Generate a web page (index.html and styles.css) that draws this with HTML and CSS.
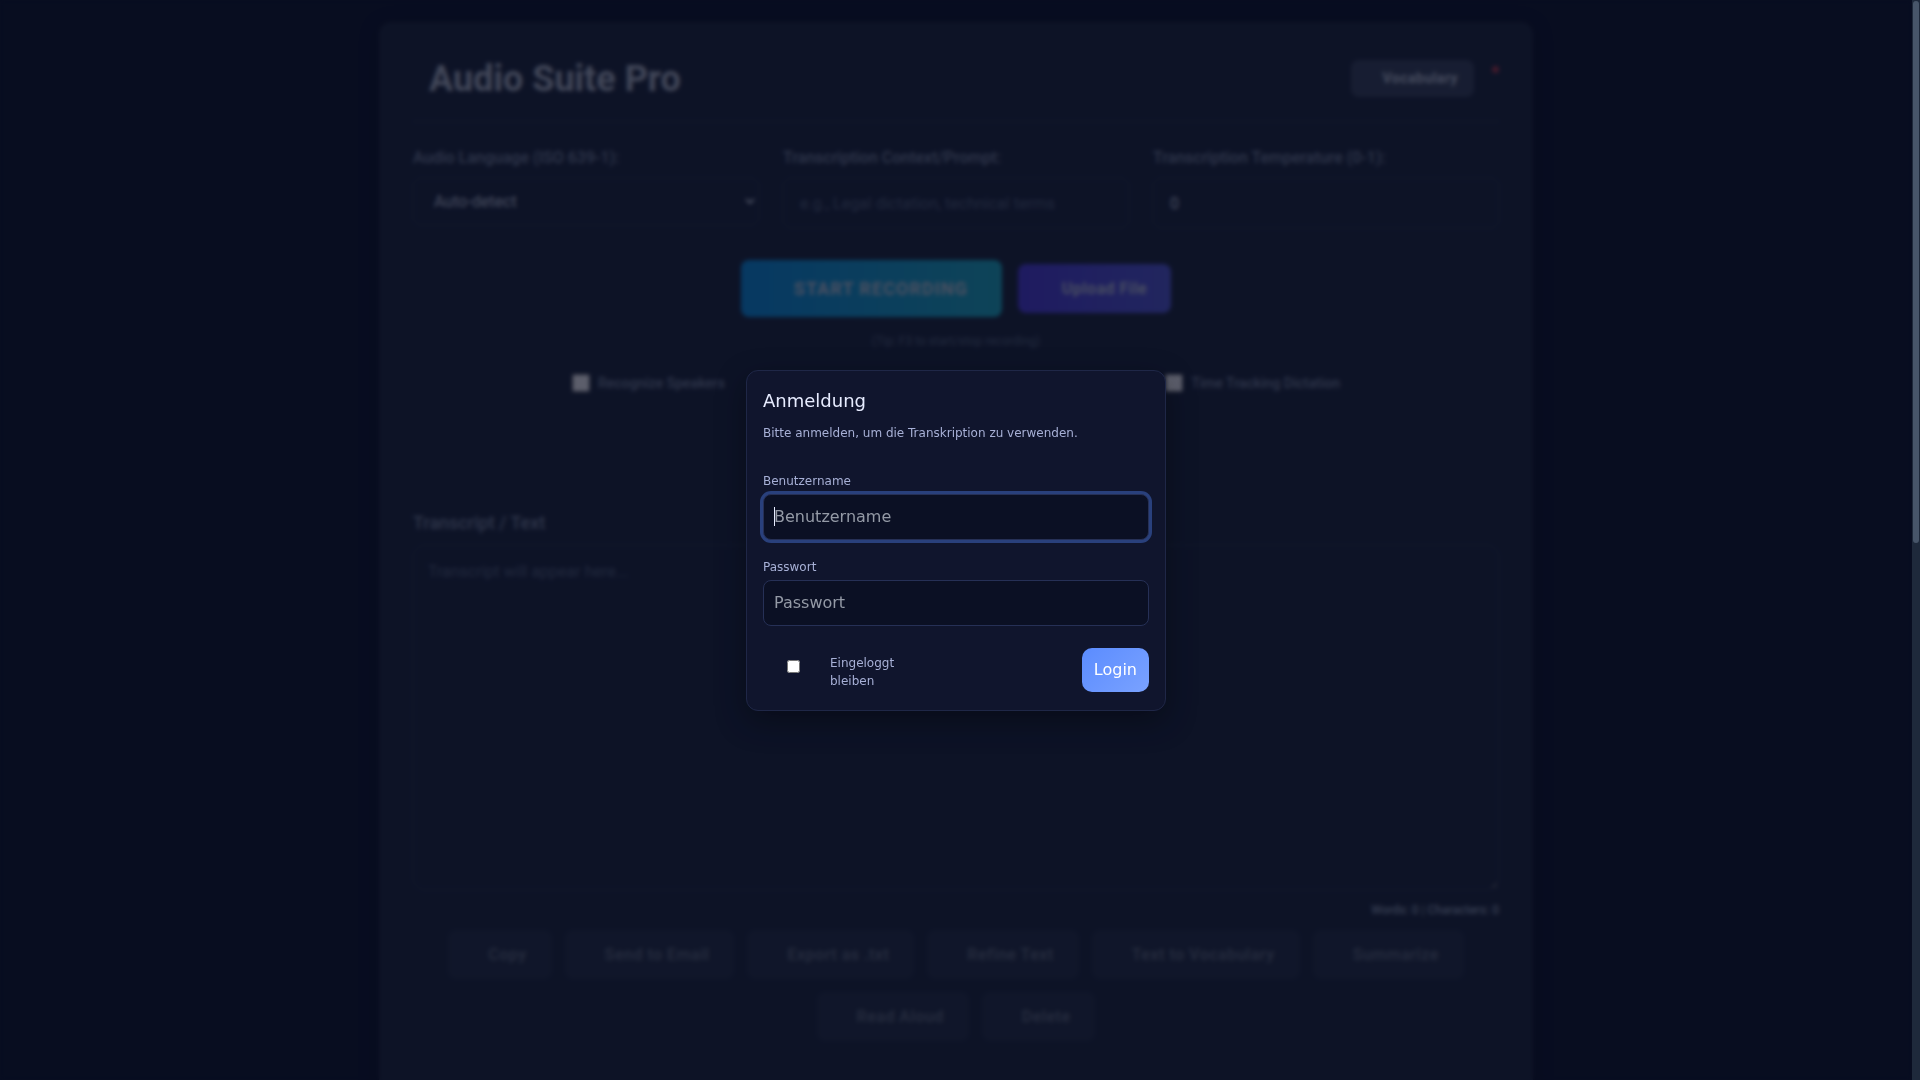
FILE: index.html
```html
<!DOCTYPE html>
<html lang="de">

<head>
  <meta charset="UTF-8">
  <meta name="viewport" content="width=device-width, initial-scale=1.0">
  <title>Audio Suite Pro</title>
  <link rel="stylesheet" href="styles.css">
</head>

<body>
  <div class="page">
    <main class="container">
      <header class="header">
        <h1 class="title">Audio Suite Pro</h1>
        <div class="header-actions">
          <button class="btn btn-vocabulary" type="button">Vocabulary</button>
          <span class="status-dot"></span>
        </div>
      </header>

      <div class="settings">
        <div class="field">
          <label for="language">Audio Language (ISO 639-1):</label>
          <select id="language" class="control control-select">
            <option>Auto-detect</option>
          </select>
        </div>
        <div class="field">
          <label for="prompt">Transcription Context/Prompt:</label>
          <input id="prompt" class="control" type="text" placeholder="e.g., Legal dictation, technical terms">
        </div>
        <div class="field">
          <label for="temperature">Transcription Temperature (0-1):</label>
          <input id="temperature" class="control" type="number" min="0" max="1" step="0.1" value="0">
        </div>
      </div>

      <div class="record-row">
        <button class="btn btn-record" type="button">START RECORDING</button>
        <button class="btn btn-upload" type="button">Upload File</button>
      </div>
      <p class="tip">(Tip: F3 to start/stop recording)</p>

      <div class="options">
        <label class="option"><input type="checkbox"> Recognize Speakers</label>
        <label class="option"><input type="checkbox"> Time Tracking Dictation</label>
      </div>

      <section class="transcript">
        <label class="transcript-label" for="transcript">Transcript / Text</label>
        <textarea id="transcript" class="transcript-text" placeholder="Transcript will appear here..."></textarea>
        <div class="counter">Words: 0 | Characters: 0</div>
      </section>

      <div class="actions">
        <button class="btn btn-action" type="button" disabled>Copy</button>
        <button class="btn btn-action" type="button" disabled>Send to Email</button>
        <button class="btn btn-action" type="button" disabled>Export as .txt</button>
        <button class="btn btn-action" type="button" disabled>Refine Text</button>
        <button class="btn btn-action" type="button" disabled>Text to Vocabulary</button>
        <button class="btn btn-action" type="button" disabled>Summarize</button>
        <button class="btn btn-action" type="button" disabled>Read Aloud</button>
        <button class="btn btn-action" type="button" disabled>Delete</button>
      </div>
    </main>
  </div>

  <div class="overlay">
    <form class="login" onsubmit="return false">
      <h2 class="login-title">Anmeldung</h2>
      <p class="login-text">Bitte anmelden, um die Transkription zu verwenden.</p>
      <label class="login-label" for="username">Benutzername</label>
      <input id="username" class="login-input" type="text" placeholder="Benutzername" autofocus>
      <label class="login-label" for="password">Passwort</label>
      <input id="password" class="login-input" type="password" placeholder="Passwort">
      <div class="login-footer">
        <div class="remember">
          <input id="remember" type="checkbox">
          <label for="remember">Eingeloggt bleiben</label>
        </div>
        <button class="login-button" type="submit">Login</button>
      </div>
    </form>
  </div>

  <!-- scroll position of the page -->
  <div class="scroll-track">
    <div class="scroll-thumb"></div>
  </div>
</body>

</html>
```

FILE: styles.css
```css
* {
  box-sizing: border-box;
}

body {
  margin: 0;
  background: #0f172a;
  color: #e2e8f0;
  font-family: Roboto, sans-serif;
  font-size: 16px;
  line-height: 24px;
}

/* the page scrolls beside its own 8px bar */
.page {
  height: 100vh;
  margin-right: 8px;
  padding: 22px 24px;
  overflow-y: auto;
  scrollbar-width: none;
}

.container {
  max-width: 1154px;
  min-height: 194vh;
  margin: 0 auto;
  padding: 35px 34px;
  background: #1e293b;
  border-radius: 12px;
  box-shadow: 0 4px 20px rgba(0, 0, 0, 0.3);
}

.header {
  display: flex;
  justify-content: space-between;
  align-items: center;
  height: 65px;
  padding: 0 0 21px 16px;
  border-bottom: 1px solid #2e3a4f;
  margin-bottom: 24px;
}

.title {
  margin: 0;
  font-size: 36px;
  line-height: 40px;
  font-weight: 700;
  color: #b4bdca;
}

.header-actions {
  display: flex;
  align-items: center;
  gap: 18px;
}

.btn {
  border: none;
  border-radius: 8px;
  color: #cbd5e1;
  font-family: inherit;
  font-size: 16px;
  font-weight: 600;
  line-height: 25px;
  letter-spacing: 0.5px;
  cursor: pointer;
}

.btn-vocabulary {
  padding: 8px 16px 8px 32px;
  background: #3b475c;
  font-size: 14px;
  line-height: 21px;
}

.status-dot {
  width: 7px;
  height: 7px;
  margin-bottom: 18px;
  border-radius: 50%;
  background: #b83c48;
}

.settings {
  display: grid;
  grid-template-columns: repeat(3, 1fr);
  align-items: start;
  gap: 24px;
  margin-bottom: 32px;
}

.field {
  display: flex;
  flex-direction: column;
  gap: 8px;
}

.field label,
.transcript-label {
  font-weight: 500;
  color: #7f8da3;
}

.control {
  width: 100%;
  height: 50px;
  padding: 12px 16px;
  background: #1d283b;
  border: 1px solid #2e3a4f;
  border-radius: 8px;
  color: #cbd5e1;
  font-family: inherit;
  font-size: 16px;
}

.control-select {
  height: 47px;
}

.control::placeholder,
.transcript-text::placeholder {
  color: #5a697f;
}

.record-row {
  display: flex;
  justify-content: center;
  align-items: center;
  gap: 16px;
}

.btn-record {
  padding: 16px 34px 16px 53px;
  background: linear-gradient(90deg, #0c93e4, #20b4c8);
  font-size: 18px;
  font-weight: 700;
  letter-spacing: 1px;
}

.btn-upload {
  padding: 12px 24px 12px 44px;
  background: linear-gradient(90deg, #4f3fe0, #575fdb);
}

.tip {
  margin: 12px 0 18px;
  text-align: center;
  font-size: 12px;
  color: #5a697f;
}

.options {
  display: flex;
  justify-content: space-between;
  max-width: 768px;
  margin: 0 auto;
}

.option {
  display: flex;
  align-items: center;
  gap: 8px;
  font-size: 14px;
  font-weight: 500;
  color: #7f8da3;
}

.option input {
  width: 18px;
  height: 18px;
  margin: 0;
}

.transcript {
  display: flex;
  flex-direction: column;
  margin-top: 116px;
}

.transcript-label {
  margin-bottom: 10px;
  font-size: 18px;
}

.transcript-text {
  width: 100%;
  height: 345px;
  padding: 14px;
  background: #1d283b;
  border: 1px solid #2e3a4f;
  border-radius: 12px;
  color: #e2e8f0;
  font-family: inherit;
  font-size: 16px;
  line-height: 24px;
  resize: vertical;
}

.counter {
  margin: 8px 0;
  text-align: right;
  font-size: 12px;
  font-weight: 500;
  color: #94a3b8;
}

.actions {
  display: flex;
  flex-wrap: wrap;
  justify-content: center;
  gap: 13px;
  padding: 0 32px;
}

.btn-action {
  padding: 12px 25px 12px 40px;
  background: #334155;
  opacity: 0.4;
}

.overlay {
  position: fixed;
  inset: 0 8px 0 0;
  display: flex;
  justify-content: center;
  align-items: center;
  background: rgba(5, 8, 27, 0.65);
  backdrop-filter: blur(2px);
}

.scroll-track {
  position: fixed;
  inset: 0 0 0 auto;
  width: 8px;
  padding: 1px;
  background: #1e293b;
}

.scroll-thumb {
  height: 50.3%;
  background: #475569;
  border-radius: 4px;
}

.login {
  width: 420px;
  padding: 16px 16px 18px;
  background: #10152d;
  border: 1px solid #1f2747;
  border-radius: 12px;
  box-shadow: 0 10px 30px rgba(0, 0, 0, 0.35);
  color: #e7ecff;
  font-family: "DejaVu Sans", sans-serif;
}

.login-title {
  margin: 0 0 10px;
  font-size: 18px;
  font-weight: 400;
  line-height: 27px;
}

.login-text {
  margin: 0 0 30px;
  font-size: 12px;
  line-height: 18px;
  color: #a7b0d6;
}

.login-label {
  display: block;
  margin-bottom: 4px;
  font-size: 12px;
  line-height: 18px;
  color: #a7b0d6;
}

.login-input {
  display: block;
  width: 100%;
  height: 46px;
  margin-bottom: 18px;
  padding: 10px;
  background: #0b1024;
  border: 1px solid #263056;
  border-radius: 8px;
  color: #e7ecff;
  font-family: inherit;
  font-size: 16px;
}

.login-input::placeholder {
  color: #949aa6;
}

.login-input:focus {
  outline: none;
  box-shadow: 0 0 0 3px #29407c;
}

/* steady caret while the focused field is empty */
.login-input:focus:placeholder-shown {
  background: linear-gradient(#e7ecff, #e7ecff) 10px center / 1px 19px no-repeat #0b1024;
  caret-color: transparent;
}

.login-footer {
  display: flex;
  justify-content: space-between;
  align-items: center;
  margin-top: 22px;
}

.remember {
  display: flex;
  align-items: flex-start;
  font-size: 12px;
  line-height: 18px;
  color: #a7b0d6;
}

.remember input {
  width: 13px;
  height: 13px;
  margin: 10px 30px 0 24px;
}

.remember label {
  width: 90px;
  padding-top: 4px;
}

.login-button {
  height: 44px;
  padding: 0 12px;
  border: none;
  border-radius: 10px;
  background: linear-gradient(135deg, #5b8cff, #7aa2ff);
  color: #fff;
  font-family: inherit;
  font-size: 16px;
  cursor: pointer;
}
```
